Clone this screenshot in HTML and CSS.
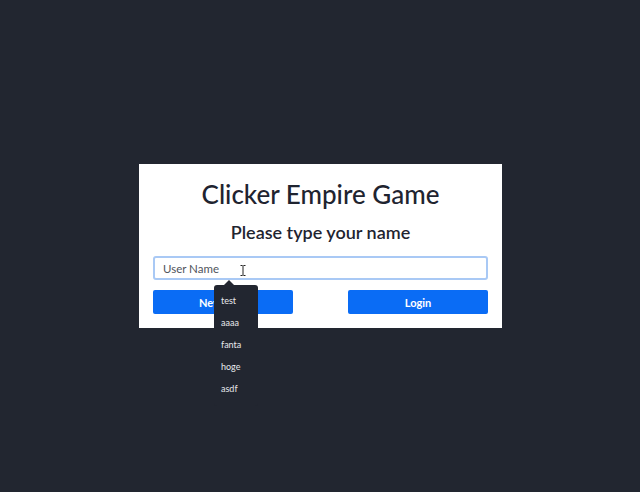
FILE: index.html
```html
<!DOCTYPE html>
<html lang="en">
<head>
<meta charset="utf-8">
<title>Clicker Empire Game</title>
<link rel="stylesheet" href="styles.css">
</head>
<body>
<main class="screen">
  <section class="card">
    <h1 class="title">Clicker Empire Game</h1>
    <h2 class="subtitle">Please type your name</h2>
    <div class="field">
      <input class="name-input" type="text" placeholder="User Name">
      <svg class="ibeam" width="6" height="11" viewBox="0 0 6 11"><path d="M0.5 0.5h2M3.5 0.5h2M3 0.5v10M0.5 10.5h2M3.5 10.5h2" stroke="#222" stroke-width="1" fill="none"/></svg>
      <ul class="suggest">
        <li>test</li>
        <li>aaaa</li>
        <li>fanta</li>
        <li>hoge</li>
        <li>asdf</li>
      </ul>
    </div>
    <div class="actions">
      <button class="btn">New User</button>
      <button class="btn">Login</button>
    </div>
  </section>
</main>
</body>
</html>
```
FILE: styles.css
```css
html, body {
  margin: 0;
  height: 100%;
}
body {
  background: #222630;
  font-family: Lato, "Noto Sans", sans-serif;
  color: #1f2430;
}
.screen {
  height: 100%;
  display: flex;
  align-items: center;
  justify-content: center;
}
.card {
  width: 335px;
  background: #ffffff;
  padding: 11px 14px 14px;
  display: flex;
  flex-direction: column;
  margin-left: 1px;
}
.title {
  margin: 0;
  font-size: 26px;
  font-weight: 500;
  line-height: 38px;
  text-align: center;
}
.subtitle {
  margin: 5px 0 10px;
  font-size: 18px;
  font-weight: 600;
  line-height: 28px;
  text-align: center;
}
.field {
  position: relative;
}
.name-input {
  box-sizing: border-box;
  width: 100%;
  height: 24px;
  border: 2px solid #a9c9f5;
  border-radius: 3px;
  padding: 0 8px;
  font-family: inherit;
  font-size: 11.5px;
  color: #333;
  outline: none;
  display: block;
}
.name-input::placeholder {
  color: #4f545c;
}
.ibeam {
  position: absolute;
  left: 87px;
  top: 9px;
}
.suggest {
  position: absolute;
  left: 61px;
  top: 29px;
  width: 44px;
  margin: 0;
  padding: 5px 0 6px;
  list-style: none;
  background: #222630;
  border-radius: 3px;
  z-index: 2;
}
.suggest::before {
  content: "";
  position: absolute;
  left: 10px;
  top: -5px;
  border-left: 5px solid transparent;
  border-right: 5px solid transparent;
  border-bottom: 5px solid #222630;
}
.suggest li {
  padding-left: 7px;
  font-size: 9px;
  line-height: 22px;
  color: #e8e9ec;
}
.actions {
  display: flex;
  justify-content: space-between;
  margin-top: 10px;
}
.btn {
  width: 140px;
  height: 24px;
  border: none;
  border-radius: 2px;
  background: #0a6cf5;
  color: #ffffff;
  font-family: inherit;
  font-size: 11px;
  font-weight: 700;
}
```
